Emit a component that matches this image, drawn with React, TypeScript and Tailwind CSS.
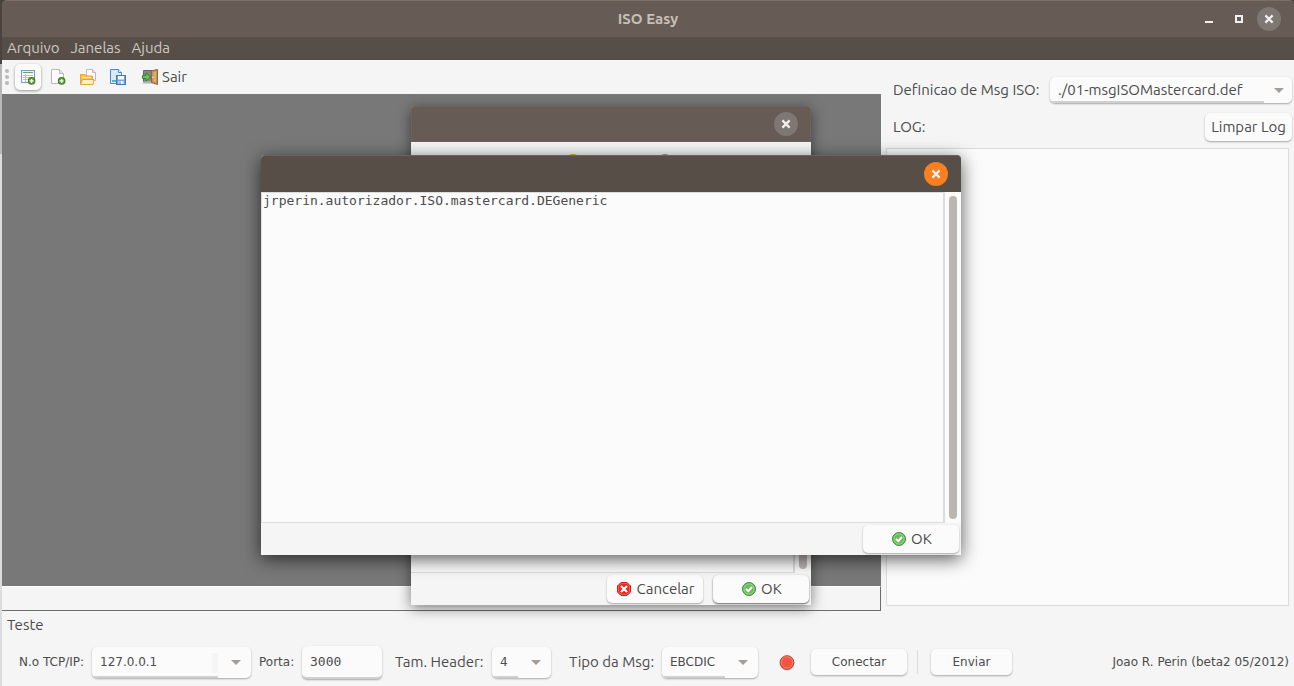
import { useState, type ReactNode } from "react";
import clsx from "clsx";

const uiFont = "font-['Ubuntu','Noto_Sans',sans-serif]";
const smallFont = "font-['DejaVu_Sans',sans-serif]";
const monoFont = "font-['DejaVu_Sans_Mono',monospace]";
const raised = "rounded-[5px] bg-[#fbfbfb] shadow-[0_1px_2px_rgba(0,0,0,0.32)]";

function CrossIcon() {
  return (
    <svg width="10" height="10" viewBox="0 0 10 10" fill="none" stroke="#f2f1f0" strokeWidth="2.2">
      <path d="M1.4 1.4 8.6 8.6M8.6 1.4 1.4 8.6" />
    </svg>
  );
}

function CloseButton({ active = false }: { active?: boolean }) {
  return (
    <button
      type="button"
      aria-label="Fechar"
      className={clsx(
        "flex size-6 shrink-0 items-center justify-center rounded-full",
        active ? "bg-[#f88020]" : "bg-[#7f7771]",
      )}
    >
      <CrossIcon />
    </button>
  );
}

function PlusBadge() {
  return (
    <g>
      <circle cx="11.6" cy="11.9" r="3.8" fill="#3f7a22" />
      <circle cx="11.6" cy="11.9" r="2.9" fill="#5f9a3c" />
      <path d="M11.6 9.900v4M9.600 11.900h4" stroke="#fff" strokeWidth="1.3" />
    </g>
  );
}

function TableIcon() {
  return (
    <svg width="16" height="16" viewBox="0 0 16 16">
      <rect x="1.5" y="1.5" width="13" height="12" fill="#fff" stroke="#6f9fcf" />
      <path d="M2 2h12v2.5H2z" fill="#e4effa" />
      <path d="M3 3.500h10" stroke="#6aa84f" />
      <path d="M3 6.500h10M3 8.500h10M3 10.500h10" stroke="#a6c4e4" />
      <path d="M5.500 5v8" stroke="#a6c4e4" />
      <PlusBadge />
    </svg>
  );
}

function NewPageIcon() {
  return (
    <svg width="16" height="16" viewBox="0 0 16 16">
      <path d="M1.5.5h8l4 4v10h-12z" fill="#fdfdfd" stroke="#b9b9b9" />
      <path d="M9.5.5v4h4" fill="#ebebeb" stroke="#b9b9b9" />
      <PlusBadge />
    </svg>
  );
}

function OpenIcon() {
  return (
    <svg width="16" height="16" viewBox="0 0 16 16">
      <path d="M6.500.5h6l3 3v8h-9z" fill="#fdfdfd" stroke="#bcbcbc" />
      <path d="M12.500.5v3h3" fill="#e6e6e6" stroke="#bcbcbc" />
      <path d="M.5 15V5.500h4.500l1 1.500h6.500V15z" fill="#f5c55a" stroke="#e3a63a" />
      <path d="M2.500 8.500h8" stroke="#fff3cc" />
      <path d="M.6 15.500 2.500 10.500h11.500l-1 5z" fill="#fdf0c0" stroke="#e3a63a" />
    </svg>
  );
}

function SaveIcon() {
  return (
    <svg width="16" height="16" viewBox="0 0 16 16">
      <path d="M.5.5h8l3 3v11H.5z" fill="#d9e9f9" stroke="#4c87c6" />
      <path d="M8.500.5v3h3" fill="#fff" stroke="#4c87c6" />
      <path d="M2 11h4v2H2z" fill="#45b6ea" />
      <rect x="6.500" y="6.500" width="9" height="9" fill="#7ba2dc" stroke="#4a74b8" />
      <rect x="8" y="7" width="6" height="3.500" fill="#f8fbff" />
      <rect x="8.500" y="12" width="5" height="3" fill="#eef3fb" />
      <path d="M10 12.500v2.500" stroke="#4a74b8" />
    </svg>
  );
}

function ExitIcon() {
  return (
    <svg width="16" height="16" viewBox="0 0 16 16">
      <path d="M1.500 1.500h9v11h-9z" fill="#858585" stroke="#666" />
      <path d="M0 14.500 3 12h8v2.500z" fill="#b0b0b0" />
      <path d="M9.500 1.800 15.500.5v15l-6-2z" fill="#c59258" stroke="#966534" />
      <path d="M11.500 3.200 14 2.600v10.500l-2.500-.6z" fill="#dcae78" />
      <circle cx="10.800" cy="8.300" r=".7" fill="#fff0b0" />
      <path d="M.5 6.500H4V3.800L8.500 8 4 12.200V9.500H.5z" fill="#6cc25c" stroke="#2d8a2a" />
    </svg>
  );
}

function OkIcon() {
  return (
    <svg width="14" height="14" viewBox="0 0 14 14">
      <circle cx="7" cy="7" r="6.500" fill="#5fb552" stroke="#3b8d37" />
      <circle cx="7" cy="7" r="5.200" fill="#6cbc5e" stroke="#a8dba0" strokeWidth=".8" />
      <path d="M4 7 6.300 9.200 10 5" fill="none" stroke="#fff" strokeWidth="1.900" />
    </svg>
  );
}

function CancelIcon() {
  return (
    <svg width="14" height="14" viewBox="0 0 14 14">
      <path d="M4 .5h6L13.500 4v6L10 13.500H4L.5 10V4z" fill="#f52222" stroke="#d90f0f" />
      <path d="M4.300 1.400h5.400l2.900 2.900v5.400l-2.900 2.900H4.300L1.400 9.700V4.300z" fill="none" stroke="#ff8080" strokeWidth=".7" />
      <path d="M4 4l6 6M10 4l-6 6" stroke="#fff" strokeWidth="2.200" />
    </svg>
  );
}

function Combo({
  id,
  options,
  className,
  selectClass,
  lineClass,
  arrowClass = "right-2.5",
  notch = false,
}: {
  id: string;
  options: string[];
  className: string;
  selectClass: string;
  lineClass: string;
  arrowClass?: string;
  notch?: boolean;
}) {
  return (
    <div className={clsx("relative shrink-0 overflow-hidden", raised, className)}>
      <select id={id} className={clsx("size-full appearance-none bg-transparent pl-2 outline-none", selectClass)}>
        {options.map((o) => (
          <option key={o}>{o}</option>
        ))}
      </select>
      {notch && <span className="pointer-events-none absolute top-1.5 right-[33px] h-5 w-1.5 bg-[#f5f5f5]" />}
      <span className={clsx("pointer-events-none absolute bottom-0 left-0 h-0.5 bg-[#d0d0ce]", lineClass)} />
      <svg
        className={clsx("pointer-events-none absolute top-1/2 -mt-0.5", arrowClass)}
        width="10"
        height="5"
        viewBox="0 0 10 5"
      >
        <path d="M0 0h10L5 5z" fill="#a39e99" />
      </svg>
    </div>
  );
}

function DialogButton({ icon, children, strong = false }: { icon: ReactNode; children: ReactNode; strong?: boolean }) {
  return (
    <button
      type="button"
      className={clsx(
        "flex h-7 w-24 items-center justify-center gap-[5px] rounded-[5px] bg-[#fbfbfb] pl-0.5",
        strong ? "shadow-[0_1px_2px_rgba(0,0,0,0.6)]" : "shadow-[0_1px_2px_rgba(0,0,0,0.32)]",
      )}
    >
      {icon}
      {children}
    </button>
  );
}

function ToolButton({ label, active = false, children }: { label: string; active?: boolean; children: ReactNode }) {
  return (
    <button
      type="button"
      aria-label={label}
      className={clsx(
        "flex h-[26px] w-[26px] items-center justify-center",
        active && "rounded-[5px] bg-[#fbfbfb] shadow-[0_1px_3px_rgba(0,0,0,0.4)]",
      )}
    >
      {children}
    </button>
  );
}

function BackDialog() {
  return (
    <section className="absolute top-[106px] left-[411px] flex h-[499px] w-[400px] flex-col rounded-t-[4px] bg-[#f5f5f5] shadow-[0_3px_14px_rgba(0,0,0,0.5)]">
      <header className="flex h-9 shrink-0 items-center justify-end rounded-t-[4px] bg-[#665c55] pr-[13px] inset-ring inset-ring-[#6e625b]">
        <CloseButton />
      </header>
      <div className="flex justify-center gap-[76px] pt-3 pl-4">
        <svg width="16" height="16" viewBox="0 0 16 16">
          <circle cx="8" cy="8" r="8" fill="#f0a030" />
        </svg>
        <svg width="16" height="16" viewBox="0 0 16 16">
          <circle cx="8" cy="8" r="7.500" fill="#fbfbfb" stroke="#8a8a8a" />
        </svg>
      </div>
      <div className="flex min-h-0 flex-1 bg-[#fbfbfb]">
        <div className="flex-1 border-r-2 border-b border-[#dcdcdc]" />
        <div className="flex w-4 justify-center pb-1">
          <div className="w-2 rounded-full bg-[#bbb6b2]" />
        </div>
      </div>
      <footer className="flex h-8 items-start justify-end gap-2.5 px-0.5 pt-0.5">
        <DialogButton icon={<CancelIcon />}>Cancelar</DialogButton>
        <DialogButton icon={<OkIcon />} strong>
          OK
        </DialogButton>
      </footer>
    </section>
  );
}

function FrontDialog() {
  const [text, setText] = useState("jrperin.autorizador.ISO.mastercard.DEGeneric");
  return (
    <section className="absolute top-[155px] left-[261px] flex h-[400px] w-[700px] flex-col rounded-t-[4px] bg-[#f5f5f5] shadow-[0_4px_18px_rgba(0,0,0,0.65)]">
      <header className="flex h-[37px] items-center justify-end rounded-t-[4px] border-t border-[#6b625b] bg-[#574e48] pr-[13px]">
        <CloseButton active />
      </header>
      <div className="flex min-h-0 flex-1 bg-[#fbfbfb]">
        <textarea
          aria-label="Classe"
          value={text}
          onChange={(e) => setText(e.target.value)}
          spellCheck={false}
          className={clsx(
            "flex-1 resize-none border border-r-2 border-[#dcdcdc] bg-[#fbfbfb] px-px text-[13px] leading-4 outline-none",
            monoFont,
          )}
        />
        <div className="flex w-4 justify-center py-1">
          <div className="w-2 rounded-full bg-[#bbb6b2]" />
        </div>
      </div>
      <footer className="flex h-8 items-start justify-end px-0.5 pt-0.5">
        <DialogButton icon={<OkIcon />}>OK</DialogButton>
      </footer>
    </section>
  );
}

function TitleBar() {
  return (
    <header className="relative flex h-[37px] items-center justify-end gap-[18px] rounded-t-[5px] border-t border-[#7a6e66] bg-[#665c55] pr-[13px]">
      <h1 className="absolute inset-x-0 text-center text-[15px] font-bold text-[#c5bfb6]">ISO Easy</h1>
      <button type="button" aria-label="Minimizar" className="flex size-3 items-center justify-center">
        <svg width="8" height="8" viewBox="0 0 8 8">
          <path d="M0 6h8v2H0z" fill="#f2f1f0" />
        </svg>
      </button>
      <button type="button" aria-label="Maximizar" className="flex size-3 items-center justify-center">
        <svg width="8" height="8" viewBox="0 0 8 8">
          <path d="M1 1h6v6H1z" fill="none" stroke="#f2f1f0" strokeWidth="2" />
        </svg>
      </button>
      <div className="-ml-1.5">
        <CloseButton />
      </div>
    </header>
  );
}

function Toolbar() {
  return (
    <div className="flex h-[34px] items-center pl-[3px]">
      <div className="mr-1.5 flex flex-col gap-[2px]">
        <span className="size-1 rounded-full bg-[#bcb9b6]" />
        <span className="size-1 rounded-full bg-[#bcb9b6]" />
        <span className="size-1 rounded-full bg-[#bcb9b6]" />
      </div>
      <div className="flex gap-1">
        <ToolButton label="Tabela" active>
          <TableIcon />
        </ToolButton>
        <ToolButton label="Novo">
          <NewPageIcon />
        </ToolButton>
        <ToolButton label="Abrir">
          <OpenIcon />
        </ToolButton>
        <ToolButton label="Salvar">
          <SaveIcon />
        </ToolButton>
        <button type="button" className="flex items-center gap-1 pl-[7px]">
          <ExitIcon />
          Sair
        </button>
      </div>
    </div>
  );
}

function TestPanel() {
  return (
    <section className="px-[5px]">
      <h2 className="pt-1 leading-5">Teste</h2>
      <div className="mt-[9px] flex h-9 items-center pl-3">
        <label htmlFor="ip" className={clsx("w-[73px] text-xs whitespace-nowrap", smallFont)}>
          N.o TCP/IP:
        </label>
        <Combo
          id="ip"
          options={["127.0.0.1"]}
          className="h-[31px] w-[159px]"
          selectClass={clsx("text-xs", smallFont)}
          lineClass="right-[33px]"
          notch
        />
        <label htmlFor="porta" className={clsx("ml-2 w-[43px] text-xs whitespace-nowrap", smallFont)}>
          Porta:
        </label>
        <input
          id="porta"
          defaultValue="3000"
          className={clsx("h-[33px] w-20 border-b-2 border-[#d0d0ce] px-2 text-[13px] outline-none", monoFont, raised)}
        />
        <label htmlFor="header" className="ml-[13px] w-[97px] whitespace-nowrap">
          Tam. Header:
        </label>
        <Combo
          id="header"
          options={["4", "2", "0"]}
          className="h-[31px] w-[59px]"
          selectClass={clsx("text-xs", smallFont)}
          lineClass="right-[33px]"
        />
        <label htmlFor="tipo" className="ml-[18px] w-[93px] whitespace-nowrap">
          Tipo da Msg:
        </label>
        <Combo
          id="tipo"
          options={["EBCDIC", "ASCII"]}
          className="h-[31px] w-24"
          selectClass={clsx("text-xs", smallFont)}
          lineClass="right-[33px]"
        />
        <svg className="ml-5 shrink-0" width="18" height="18" viewBox="0 0 18 18">
          <circle cx="9" cy="10.300" r="7.300" fill="#000" opacity=".25" />
          <circle cx="9" cy="9.500" r="6.800" fill="#f0553f" stroke="#b93a2b" />
          <circle cx="9" cy="9.500" r="5.700" fill="none" stroke="#ff8a78" strokeWidth=".8" />
        </svg>
        <button type="button" className={clsx("ml-[15px] h-[26px] w-24 shrink-0 text-xs", smallFont, raised)}>
          Conectar
        </button>
        <span className="mx-2.5 h-6 w-px bg-[#dcdcdc]" />
        <button type="button" className={clsx("ml-[3px] h-[26px] w-[81px] shrink-0 text-xs", smallFont, raised)}>
          Enviar
        </button>
        <p className={clsx("ml-auto text-xs whitespace-nowrap", smallFont)}>Joao R. Perin (beta2 05/2012)</p>
      </div>
    </section>
  );
}

export default function App() {
  return (
    <div className={clsx("relative flex min-h-screen overflow-hidden bg-[#4a433e] text-[15px] text-[#4c4c4c]", uiFont)}>
      <div className="flex w-0.5 shrink-0 flex-col">
        <span className="h-16 bg-[#4a433e]" />
        <span className="h-[90px] bg-[#b8b8b8]" />
        <span className="flex-1 bg-[#dcdcdc]" />
      </div>
      <div className="flex min-w-0 flex-1 flex-col">
        <TitleBar />
        <nav className="flex h-[23px] items-center gap-[11px] bg-[#574e48] pl-[5px] text-[#cfc9c1]">
          <button type="button">Arquivo</button>
          <button type="button">Janelas</button>
          <button type="button">Ajuda</button>
        </nav>
        <main className="flex flex-1 flex-col bg-[#f5f5f5]">
          <div className="flex flex-1">
            <div className="flex min-w-0 flex-1 flex-col">
              <Toolbar />
              <div className="flex-1 bg-[#787878]" />
              <div className="h-[25px] border-t border-r border-b border-t-white border-r-[#6e6e6e] border-b-[#6e6e6e]" />
            </div>
            <aside className="flex w-[413px] shrink-0 flex-col pt-4 pl-[5px]">
              <div className="flex h-7 items-center justify-between pr-0.5 pl-[7px]">
                <label htmlFor="definicao">Definicao de Msg ISO:</label>
                <Combo
                  id="definicao"
                  options={["./01-msgISOMastercard.def"]}
                  className="h-[26px] w-[242px]"
                  selectClass=""
                  lineClass="right-7"
                  arrowClass="right-2"
                />
              </div>
              <div className="mt-[9px] flex h-7 items-center justify-between pr-0.5 pl-[7px]">
                <label htmlFor="log">LOG:</label>
                <button type="button" className={clsx("h-7 px-1.5", raised)}>
                  Limpar Log
                </button>
              </div>
              <textarea
                id="log"
                readOnly
                className="mt-[7px] mr-[5px] mb-[5px] flex-1 resize-none border border-[#dcdcdc] bg-[#fbfbfb] outline-none"
              />
            </aside>
          </div>
          <div className="h-[75px]">
            <TestPanel />
          </div>
        </main>
      </div>
      <BackDialog />
      <FrontDialog />
    </div>
  );
}
